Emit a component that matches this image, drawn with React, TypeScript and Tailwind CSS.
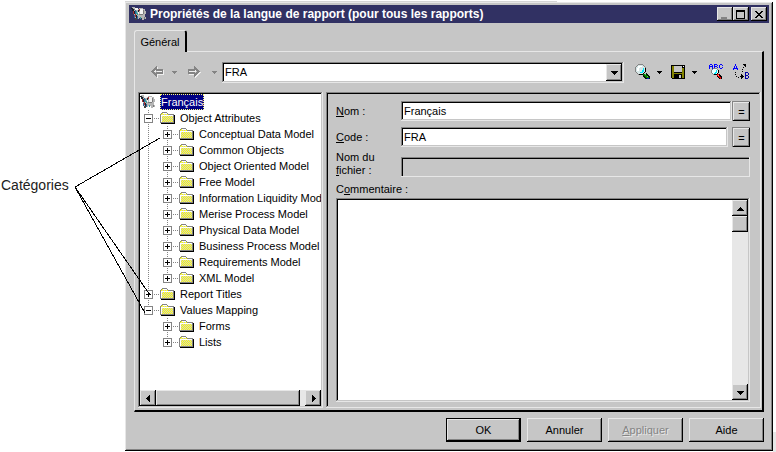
import { useState } from "react";
import type { ReactNode } from "react";

const RAISED =
  "bg-[#c6c6c6] shadow-[inset_-1px_-1px_0_#000,inset_1px_1px_0_#e7e7e7,inset_-2px_-2px_0_#848484]";
const SUNKEN =
  "shadow-[inset_-1px_-1px_0_#e7e7e7,inset_1px_1px_0_#848484,inset_-2px_-2px_0_#c6c6c6,inset_2px_2px_0_#000]";

type Item = { label: string; level: 1 | 2; open?: boolean; last?: boolean; trunk?: boolean };

const ITEMS: Item[] = [
  { label: "Object Attributes", level: 1, open: true },
  { label: "Conceptual Data Model", level: 2, trunk: true },
  { label: "Common Objects", level: 2, trunk: true },
  { label: "Object Oriented Model", level: 2, trunk: true },
  { label: "Free Model", level: 2, trunk: true },
  { label: "Information Liquidity Model", level: 2, trunk: true },
  { label: "Merise Process Model", level: 2, trunk: true },
  { label: "Physical Data Model", level: 2, trunk: true },
  { label: "Business Process Model", level: 2, trunk: true },
  { label: "Requirements Model", level: 2, trunk: true },
  { label: "XML Model", level: 2, trunk: true, last: true },
  { label: "Report Titles", level: 1 },
  { label: "Values Mapping", level: 1, open: true, last: true },
  { label: "Forms", level: 2 },
  { label: "Lists", level: 2, last: true },
];

function AppIcon() {
  return (
    <svg className="shrink-0" width="16" height="16" viewBox="0 0 16 16" shapeRendering="crispEdges" aria-hidden="true">
      <path d="M1 1h3v1h3v1h1V2h4v1h2v2h1v3h-1v3h1v2h-2v1h-2v-2h-1v-1H9v1H8v1H6V9H5v3H3V8H2V5H1z" fill="#b5b5b5" />
      <path d="M4 2h3v2H4zM9 3h3v5H9zM7 5h1v3H7z" fill="#f4f4f4" />
      <path d="M12 4h1v4h-1zM8 8h4v1H8zM13 11h1v2h-1zM2 3h2v1H2z" fill="#7b7b7b" />
      <path d="M0 2h2v1H0zM1 3h2v2H1zM3 5h1v3H3zM5 9h1v4H5zM7 4h1v2H7z" fill="#182028" />
      <path d="M2 5h1v3H2zM4 8h1v3H4zM8 3h1v2H8z" fill="#a53131" />
      <path d="M5 5h1v3H5zM6 7h1v2H6zM9 11h1v2H9z" fill="#319c9c" />
      <path d="M4 4h1v4H4zM6 10h1v3H6zM3 9h1v3H3z" fill="#31639c" />
      <path d="M4 12h2v2H4z" fill="#424242" />
    </svg>
  );
}

function Folder() {
  return (
    <svg className="shrink-0" width="16" height="16" viewBox="0 0 16 16" shapeRendering="crispEdges" aria-hidden="true">
      <defs>
        <pattern id="weave" width="2" height="2" patternUnits="userSpaceOnUse">
          <rect width="2" height="2" fill="#ffff00" />
          <rect width="1" height="1" fill="#cecece" />
          <rect x="1" y="1" width="1" height="1" fill="#cecece" />
        </pattern>
      </defs>
      <path d="M1 4h1V3h1V2h4v1h1v1h6v9H1z" fill="url(#weave)" />
      <path d="M0 4h1v9H0zM1 3h1v1H1zM2 2h5v1H2zM7 3h1v1H7zM8 4h6v1H8zM13 5h1v8h-1zM1 12h13v1H1z" fill="#848484" />
      <path d="M1 5h12v1H1zM3 3h4v1H3zM1 6h1v6H1z" fill="#fff" />
      <path d="M14 5h1v9H1v-1h13z" fill="#000" />
    </svg>
  );
}

function Guides({ item }: { item: Item }) {
  const x = item.level === 1 ? 8 : 27;
  const w = item.level === 1 ? 20 : 39;
  const dots = { stroke: "#848484", strokeDasharray: "1 1" };
  return (
    <svg className="shrink-0" width={w} height="16" shapeRendering="crispEdges" aria-hidden="true">
      {item.trunk && <path d="M8.5 0V16" {...dots} />}
      <path d={`M${x + 0.5} 0V${item.last ? 8 : 16}`} {...dots} />
      <path d={`M${x + 6} 8.5H${w}`} {...dots} />
      <rect x={x - 3.5} y="4.5" width="8" height="8" fill="#fff" stroke="#848484" />
      <path d={`M${x - 2} 8.5h5`} stroke="#000" />
      {!item.open && <path d={`M${x + 0.5} 6v5`} stroke="#000" />}
    </svg>
  );
}

function Triangle({ dir }: { dir: "up" | "down" | "left" | "right" }) {
  const d = {
    up: "M3 2h1v1h1v1h1v1h1v1H0V5h1V4h1V3h1z",
    down: "M0 2h7v1H6v1H5v1H4v1H3V5H2V4H1V3H0z",
    left: "M5 0v7H4V6H3V5H2V4H1V3h1V2h1V1h1V0z",
    right: "M2 0h1v1h1v1h1v1h1v1H5v1H4v1H3v1H2z",
  }[dir];
  return (
    <svg width="7" height="7" viewBox="0 0 7 7" shapeRendering="crispEdges" aria-hidden="true">
      <path d={d} fill="#000" />
    </svg>
  );
}

function Caret({ color = "#000" }: { color?: string }) {
  return (
    <svg width="5" height="3" viewBox="0 0 5 3" shapeRendering="crispEdges" aria-hidden="true">
      <path d="M0 0h5v1H4v1H3v1H2V2H1V1H0z" fill={color} />
    </svg>
  );
}

function Arrow({ dir }: { dir: "left" | "right" }) {
  const left = "M0 5h1V4h1V3h1V2h1V1h1V0h1v3h6v5H6v3H5v-1H4V9H3V8H2V7H1V6H0zM3 5v1h1v1h1V6h6V5H5V4H4v1z";
  const right = "M12 5h-1V4h-1V3H9V2H8V1H7V0H6v3H0v5h6v3h1v-1h1V9h1V8h1V7h1V6h1zM9 5v1H8v1H7V6H1V5h6V4h1v1z";
  const d = dir === "left" ? left : right;
  return (
    <svg width="13" height="12" viewBox="0 0 13 12" shapeRendering="crispEdges" fillRule="evenodd" aria-hidden="true">
      <path d={d} fill="#efefef" transform="translate(1 1)" />
      <path d={d} fill="#848484" />
    </svg>
  );
}

function Magnifier() {
  return (
    <svg width="16" height="16" viewBox="0 0 16 16" shapeRendering="crispEdges" aria-hidden="true">
      <path d="M3 0h5v1h1v1h1v1h1v5h-1v1H9v1H8v1H3v-1H2V9H1V8H0V3h1V2h1V1h1z" fill="#848484" />
      <path d="M3 1h5v1h1v1h1v5H9v1H8v1H3V9H2V8H1V3h1V2h1z" fill="#d6e7e7" />
      <path d="M3 2h4v1H5v1H4v3H2V4h1z" fill="#fff" />
      <path d="M8 4h1v4H8v1H5V8h2V6h1z" fill="#00e7f7" />
      <path d="M10 4h1v4h-1v1H9v1H8v1H4v-1h4V9h1V8h1z" fill="#000" />
      <path d="M8 10h3v1h1v1h1v1h1v1h1v1h-3v-1h-1v-1h-1v-1H9v-1H8z" fill="#008400" />
      <path d="M11 9h1v1h1v1h1v1h1v3h-1v-2h-1v-1h-1v-1h-1zM8 11h1v1h1v1h1v1h1v1h-2v-1H9v-1H8z" fill="#001800" />
      <path d="M10 10h1v1h-1zM12 12h1v1h-1z" fill="#63ce63" />
      <path d="M12 14h2v1h-2z" fill="#0000ce" />
    </svg>
  );
}

function Floppy() {
  return (
    <svg width="14" height="14" viewBox="0 0 14 14" shapeRendering="crispEdges" aria-hidden="true">
      <path d="M0 0h14v14H1v-1H0z" fill="#000" />
      <path d="M1 1h2v7h8V3h2v10H1z" fill="#848400" />
      <path d="M3 1h8v6H3z" fill="#c6c6c6" />
      <path d="M12 1h1v1h-1z" fill="#fff" />
      <path d="M3 9h8v5H3z" fill="#000" />
      <path d="M8 10h2v3H8z" fill="#c6c6c6" />
    </svg>
  );
}

function SpellIcon() {
  return (
    <svg width="16" height="16" viewBox="0 0 16 16" shapeRendering="crispEdges" aria-hidden="true">
      <g fill="#0000ff">
        <path d="M1 0h2v1H1zM0 1h1v4H0zM3 1h1v4H3zM1 2h2v1H1z" />
        <path d="M5 0h3v1H5zM5 1h1v4H5zM8 1h1v1H8zM6 2h2v1H6zM8 3h1v1H8zM6 4h2v1H6z" />
        <path d="M11 0h2v1h-2zM10 1h1v3h-1zM13 1h1v1h-1zM11 4h2v1h-2zM13 3h1v1h-1z" />
      </g>
      <path d="M4 4h4v1h1v1h1v3H9v1H8v1H4v-1H3V9H2V6h1V5h1z" fill="#848484" />
      <path d="M4 5h4v1h1v3H8v1H4V9H3V6h1z" fill="#e7ffff" />
      <path d="M7 6h1v3H7v1H5V9h1V8h1z" fill="#00e7f7" />
      <path d="M9 6h1v3H9v1H8v1H5v-1h3V9h1z" fill="#000" />
      <path d="M8 10h2v1h1v1h1v1h1v2h-2v-1h-1v-1H9v-1H8z" fill="#f70000" />
      <path d="M10 10h1v1h1v1h1v3h-1v-2h-1v-1h-1zM8 12h1v1h1v1h1v1h-1v-1H9v-1H8z" fill="#000" />
      <path d="M9 11h1v1H9z" fill="#ff9c9c" />
    </svg>
  );
}

function ReplaceIcon() {
  return (
    <svg width="16" height="16" viewBox="0 0 16 16" shapeRendering="crispEdges" aria-hidden="true">
      <path d="M2 0h1v2H2zM1 2h1v2H1zM3 2h1v2H3zM0 4h5v1H0zM0 5h1v1H0zM4 5h1v1H4z" fill="#0000ff" />
      <path d="M12 8h1v7h-1zM13 8h2v1h-2zM15 9h1v2h-1zM13 11h2v1h-2zM15 12h1v2h-1zM13 14h2v1h-2z" fill="#0000a5" />
      <path
        d="M10 0h3v3h-1V2h-1V1h-1zM10 3h1v1h-1zM9 5h1v1H9zM9 7h1v1H9zM2 8h1v1H2zM2 10h1v1H2zM3 12h1v1H3zM5 13h1v1H5zM7 12h1v1H7zM8 10h1v1h1v1h1v1h-1v1H9v1H8z"
        fill="#000"
      />
    </svg>
  );
}

function Tool({ label, children, className, disabled }: { label: string; children: ReactNode; className: string; disabled?: boolean }) {
  return (
    <button type="button" aria-label={label} disabled={disabled} className={`flex h-5 shrink-0 items-center justify-center ${className}`}>
      {children}
    </button>
  );
}

function ScrollButton({ label, dir }: { label: string; dir: "up" | "down" | "left" | "right" }) {
  return (
    <button type="button" aria-label={label} className={`flex size-4 shrink-0 items-center justify-center ${RAISED}`}>
      <Triangle dir={dir} />
    </button>
  );
}

function EqualButton({ label }: { label: string }) {
  return (
    <button type="button" aria-label={label} className={`flex h-5 w-[18px] shrink-0 items-center justify-center border-t border-l border-[#848484] ${RAISED}`}>
      =
    </button>
  );
}

function CaptionButton({ label, children }: { label: string; children: ReactNode }) {
  return (
    <button type="button" aria-label={label} className={`flex h-[14px] w-4 items-center justify-center ${RAISED}`}>
      <svg width="10" height="9" viewBox="0 0 10 9" shapeRendering="crispEdges" aria-hidden="true">
        {children}
      </svg>
    </button>
  );
}

function Toolbar() {
  return (
    <div className="flex h-5 items-center pl-[10px]">
      <Tool label="Précédent" className="w-[18px]" disabled><Arrow dir="left" /></Tool>
      <Tool label="Historique précédent" className="w-4" disabled><Caret color="#848484" /></Tool>
      <Tool label="Suivant" className="w-6" disabled><Arrow dir="right" /></Tool>
      <Tool label="Historique suivant" className="w-4" disabled><Caret color="#848484" /></Tool>
      <div className={`relative flex h-[21px] flex-1 bg-white p-[2px] ${SUNKEN}`}>
        <select aria-label="Langue" className="w-full appearance-none bg-transparent pl-[1px] text-[11px] leading-4 outline-none">
          <option>FRA</option>
        </select>
        <span className={`pointer-events-none absolute inset-y-[2px] right-[2px] flex w-4 items-center justify-center ${RAISED}`}>
          <Triangle dir="down" />
        </span>
      </div>
      <Tool label="Rechercher" className="ml-[7px] w-6"><Magnifier /></Tool>
      <Tool label="Options de recherche" className="w-2"><Caret /></Tool>
      <Tool label="Enregistrer" className="ml-[3px] w-6"><Floppy /></Tool>
      <Tool label="Options d'enregistrement" className="w-2"><Caret /></Tool>
      <Tool label="Orthographe" className="ml-[7px] w-6"><SpellIcon /></Tool>
      <Tool label="Remplacer" className="mr-2 w-6"><ReplaceIcon /></Tool>
    </div>
  );
}

function Tree() {
  return (
    <div className={`flex w-[185px] shrink-0 flex-col p-[2px] ${SUNKEN}`}>
      <ul className="flex-1 overflow-hidden bg-white">
        <li className="flex h-4 items-center">
          <AppIcon />
          <span className="ml-1 h-4 border border-dotted border-[#ffff7b] bg-[#000084] leading-[14px] text-white">Français</span>
        </li>
        {ITEMS.map((item) => (
          <li key={item.label} className="flex h-4 items-center">
            <Guides item={item} />
            <Folder />
            <span className="ml-1 leading-4 whitespace-nowrap">{item.label}</span>
          </li>
        ))}
      </ul>
      <div className="flex h-4 bg-[#e7e7e7]">
        <ScrollButton label="Défiler à gauche" dir="left" />
        <div className={`mr-[5px] flex-1 ${RAISED}`} />
        <ScrollButton label="Défiler à droite" dir="right" />
      </div>
    </div>
  );
}

function Form() {
  const [name, setName] = useState("Français");
  const [code, setCode] = useState("FRA");
  const [comment, setComment] = useState("");
  return (
    <div className={`flex min-w-0 flex-1 flex-col pt-[9px] pr-[11px] pb-[6px] pl-[10px] ${SUNKEN}`}>
      <div className="mb-[6px] flex h-5 items-center">
        <label htmlFor="nom" className="w-[65px]"><u>N</u>om :</label>
        <input id="nom" value={name} onChange={(e) => setName(e.target.value)} className={`h-5 min-w-0 flex-1 bg-white px-[3px] outline-none ${SUNKEN}`} />
        <EqualButton label="Nom égal au code" />
      </div>
      <div className="flex h-5 items-center">
        <label htmlFor="code" className="w-[65px]"><u>C</u>ode :</label>
        <input id="code" value={code} onChange={(e) => setCode(e.target.value)} className={`mr-1 h-5 min-w-0 flex-1 bg-white px-[3px] outline-none ${SUNKEN}`} />
        <EqualButton label="Code égal au nom" />
      </div>
      <div className="mt-1 flex items-end">
        <label htmlFor="fichier" className="w-[65px] leading-[13px]">Nom du<br /><u>f</u>ichier :</label>
        <input id="fichier" readOnly className="h-5 min-w-0 flex-1 bg-[#c6c6c6] px-[3px] shadow-[inset_-1px_-1px_0_#e7e7e7,inset_1px_1px_0_#848484,inset_2px_2px_0_#000] outline-none" />
      </div>
      <label htmlFor="commentaire" className="mt-1 mb-[1px] leading-4">C<u>o</u>mmentaire :</label>
      <div className={`flex flex-1 bg-white p-[2px] ${SUNKEN}`}>
        <textarea id="commentaire" value={comment} onChange={(e) => setComment(e.target.value)} className="min-w-0 flex-1 resize-none overflow-hidden outline-none" />
        <div className="flex w-4 flex-col bg-[#e7e7e7]">
          <ScrollButton label="Défiler vers le haut" dir="up" />
          <div className={`h-4 ${RAISED}`} />
          <div className="flex-1" />
          <ScrollButton label="Défiler vers le bas" dir="down" />
        </div>
      </div>
    </div>
  );
}

export default function App() {
  const action = `h-6 w-[75px] ${RAISED}`;
  return (
    <main className="relative flex bg-white font-['Liberation_Sans',Arial,sans-serif] text-[11px] leading-4 text-black">
      <p className="w-[125px] shrink-0 pt-[177px] pl-[1px] text-[14px] text-[#212121]">Catégories</p>

      <div className="min-w-0 flex-1 pt-px pb-px">
        <div className="h-px w-2/3 bg-[#d6d6d6]" />
        <section aria-label="Propriétés de la langue de rapport" className={`flex flex-col px-1 pt-[3px] pb-[9px] ${RAISED}`}>
          <header className="flex h-[18px] items-center gap-[3px] bg-[#313163] px-[2px] text-white">
            <AppIcon />
            <h1 className="flex-1 text-[12px] font-bold whitespace-nowrap">Propriétés de la langue de rapport (pour tous les rapports)</h1>
            <div className="flex text-black">
              <CaptionButton label="Réduire"><path d="M1 7h6v2H1z" fill="#848484" /></CaptionButton>
              <CaptionButton label="Agrandir"><path d="M0 0h9v9H0zM1 2v6h7V2z" fillRule="evenodd" /></CaptionButton>
              <span className="w-[2px]" />
              <CaptionButton label="Fermer"><path d="M1 1h2v1h1v1h2V2h1V1h2v1H8v1H7v1H6v1h1v1h1v1h1v1H7V7H6V6H4v1H3v1H1V7h1V6h1V5h1V4H3V3H2V2H1z" /></CaptionButton>
            </div>
          </header>

          <div role="tablist" className="flex pt-[7px] pl-[5px]">
            <button type="button" role="tab" aria-selected="true" className="relative z-10 -mb-px h-[22px] w-[53px] rounded-t-[3px] border-t border-r-2 border-l border-t-[#e7e7e7] border-r-black border-l-[#e7e7e7] bg-[#c6c6c6]">
              Général
            </button>
          </div>

          <div role="tabpanel" className="mx-[5px] flex h-[361px] flex-col gap-[10px] border-t border-r-2 border-b-2 border-l border-t-[#e7e7e7] border-r-black border-b-black border-l-[#e7e7e7] pt-[10px] pr-[1px] pb-[2px] pl-[3px]">
            <Toolbar />
            <div className="flex flex-1 gap-[3px]">
              <Tree />
              <Form />
            </div>
          </div>

          <footer className="mt-[6px] mr-[5px] flex justify-end gap-[6px]">
            <button type="button" className={`border border-black ${action}`}>OK</button>
            <button type="button" className={action}>Annuler</button>
            <button type="button" disabled className={`text-[#848484] [text-shadow:1px_1px_0_#e7e7e7] ${action}`}><u>A</u>ppliquer</button>
            <button type="button" className={action}>Aide</button>
          </footer>
        </section>
      </div>
      <div className="h-5 w-[3px] shrink-0 self-end bg-[#e7e7e7]" />

      <svg className="pointer-events-none absolute top-0 left-0" width="160" height="320" shapeRendering="crispEdges" aria-hidden="true">
        <path d="M75 187L160 138M75 187L150 295M75 187L145 313" stroke="#000" fill="none" />
      </svg>
    </main>
  );
}
